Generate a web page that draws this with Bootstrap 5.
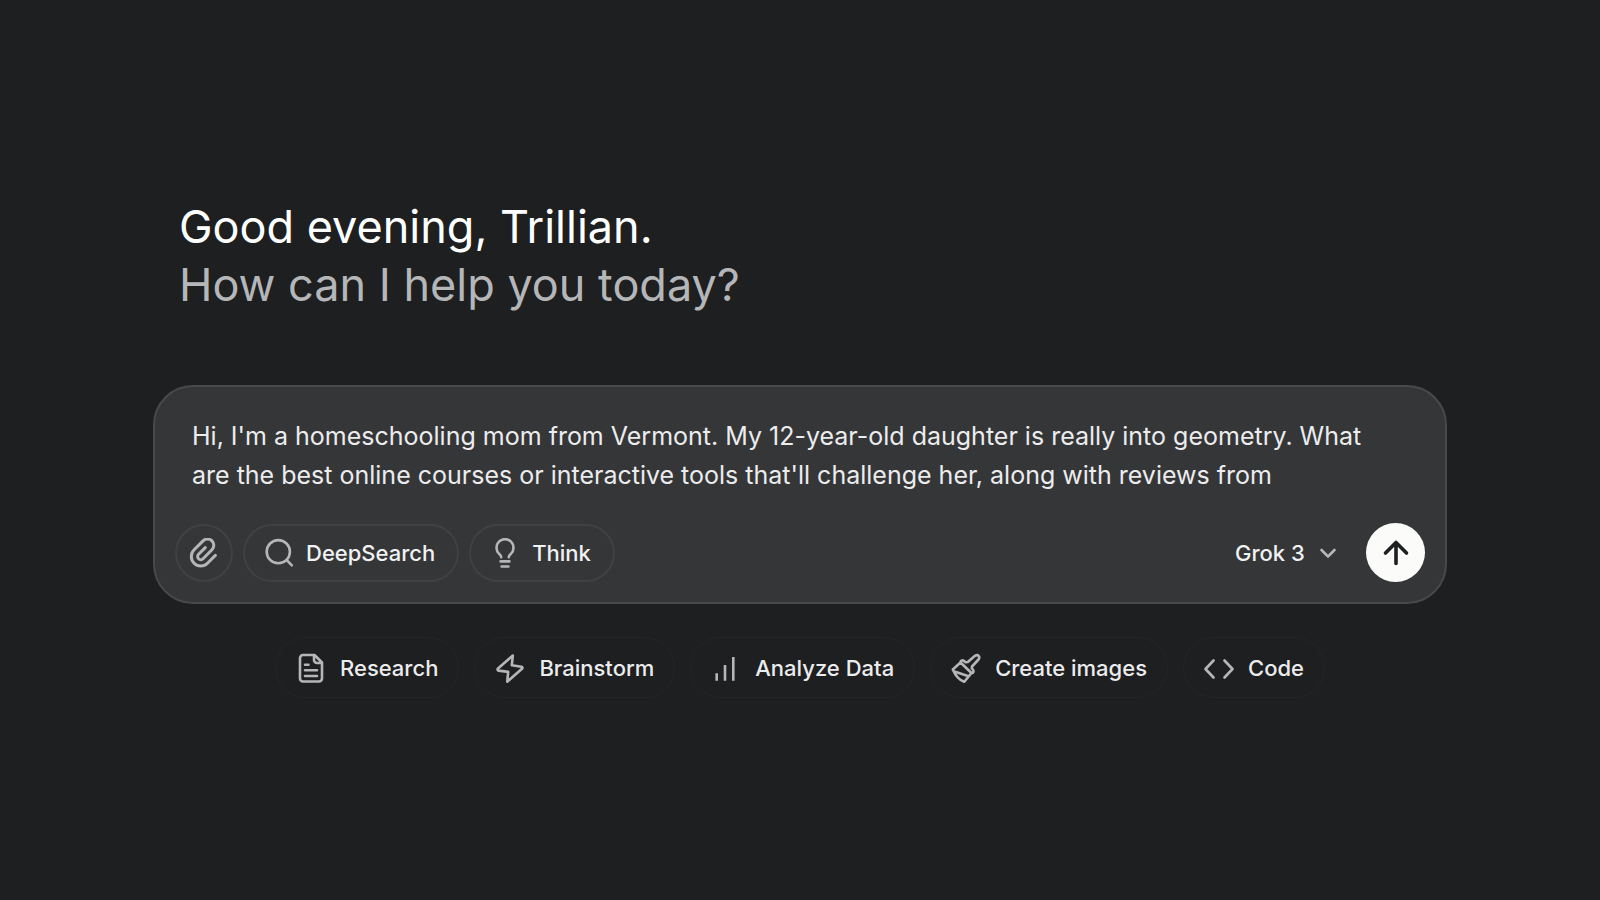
<!DOCTYPE html>
<html lang="en" data-bs-theme="dark">
<head>
<meta charset="utf-8">
<meta name="viewport" content="width=device-width, initial-scale=1">
<title>Grok</title>
<link href="https://cdn.jsdelivr.net/npm/bootstrap@5.3.0/dist/css/bootstrap.min.css" rel="stylesheet">
<style>
  body { background: #1e1f21; color: #f4f5f5; font-family: Inter, "Liberation Sans", sans-serif; }
  .chat-shell { max-width: 1294px; }
  .greeting { font-size: 45px; line-height: 58px; font-weight: 400; padding-left: 26px; margin-bottom: 71px; }
  .greeting-sub { color: #b5b6b8; }
  .composer { background: #353638; border: 2px solid #48494b; border-radius: 40px; padding: 30px 20px 20px; }
  .prompt-box { background: transparent; border: 0; outline: 0; resize: none; color: #ececed; font-size: 25px; line-height: 39px; padding: 0 40px 0 17px; overflow: hidden; display: block; margin-bottom: 28px; }
  .tool-group { gap: 10px; }
  .tool-btn { height: 58px; border: 2px solid #404143; color: #f0f1f1; font-size: 22px; font-weight: 500; line-height: 30px; gap: 12px; padding: 0 22px 0 19px; }
  .tool-round { width: 58px; padding: 0; }
  .tool-btn:hover, .chip:hover { background: #3d3e40; color: #fff; border-color: #4a4b4d; }
  .model-select { appearance: none; background: transparent; border: 0; color: #f0f1f1; font-size: 22px; font-weight: 500; line-height: 30px; padding: 0; }
  .model-caret { margin: 0 23px 0 8px; }
  .send-btn { width: 59px; height: 59px; padding: 0; background: #fbfbf9; color: #1e1f21; }
  .send-btn:hover { background: #e6e6e4; color: #1e1f21; }
  .chip-row { margin-top: 33px; gap: 15px; }
  .chip { height: 61px; border: 1px solid #242527; color: #ececed; font-size: 22px; font-weight: 500; line-height: 30px; gap: 14px; padding: 0 20px; }
  .glyph { width: 30px; height: 30px; flex: none; fill: none; stroke: #b5b6b8; stroke-width: 2.6; stroke-linecap: round; stroke-linejoin: round; }
  .glyph-clip { stroke-width: 1.9; }
  .send-btn .glyph { stroke: #1e1f21; stroke-width: 3.6; }
</style>
</head>
<body>
<main class="min-vh-100 d-flex flex-column justify-content-center pb-1">
  <div class="chat-shell w-100 mx-auto">
    <h1 class="greeting">Good evening, Trillian.<br><span class="greeting-sub">How can I help you today?</span></h1>

    <form class="composer">
      <textarea id="prompt" class="prompt-box w-100" rows="2" spellcheck="false" aria-label="Message">Hi, I'm a homeschooling mom from Vermont. My 12-year-old daughter is really into geometry. What are the best online courses or interactive tools that'll challenge her, along with reviews from</textarea>
      <div class="d-flex flex-wrap align-items-center">
        <div class="tool-group d-flex">
          <button type="button" class="btn tool-btn tool-round rounded-circle d-flex align-items-center justify-content-center" aria-label="Attach file">
            <svg class="glyph glyph-clip" viewBox="2.4 2.4 19 19"><path transform="rotate(45 12 12)" d="M10 9v6a2 2 0 0 0 4 0V7a4 4 0 0 0-8 0v8a6 6 0 0 0 12 0V8"/></svg>
          </button>
          <button type="button" class="btn tool-btn rounded-pill d-flex align-items-center">
            <svg class="glyph" viewBox="0 0 30 30"><circle cx="14.3" cy="13.7" r="11.6"/><path d="M22.8 22.2l5 5.2"/></svg>DeepSearch
          </button>
          <button type="button" class="btn tool-btn rounded-pill d-flex align-items-center">
            <svg class="glyph" viewBox="0 0 30 30"><path d="M11.200 19.200c0-1.500-1-2.500-2.200-3.500a8.500 8.500 0 1 1 12 0c-1.200 1-2.200 2-2.200 3.500"/><path d="M10.600 23.400h8.800M11.600 28.500h6.800"/></svg>Think
          </button>
        </div>
        <div class="d-flex align-items-center ms-auto">
          <select id="model" class="model-select" aria-label="Model"><option>Grok 3</option></select>
          <svg class="glyph model-caret" viewBox="0 0 30 30"><path d="M8.500 12l6.500 6.500L21.500 12"/></svg>
          <button type="submit" class="btn send-btn rounded-circle border-0 d-flex align-items-center justify-content-center" aria-label="Send">
            <svg class="glyph" viewBox="0 0 30 30"><path d="M15 25.500V4.500M4.500 15L15 4.500 25.500 15"/></svg>
          </button>
        </div>
      </div>
    </form>

    <div class="chip-row d-flex flex-wrap justify-content-center">
      <button type="button" class="btn chip rounded-pill d-flex align-items-center">
        <svg class="glyph" viewBox="0 0 30 30"><path d="M18.500 2H7a3 3 0 0 0-3 3v20.500a3 3 0 0 0 3 3h16a3 3 0 0 0 3-3V9.500zM18 2.500V7a3 3 0 0 0 3 3h4.500M9 11.700h3.500M9 17.300h12M9 23h12"/></svg>Research
      </button>
      <button type="button" class="btn chip rounded-pill d-flex align-items-center">
        <svg class="glyph" viewBox="0 0 30 30"><path d="M17.800 2.500L3 15.500c-.8.700-.4 1.900.7 2.100l9.500 1.300-1 9.800L27 15.800c.8-.7.500-1.900-.6-2.100L16.800 12.300z"/></svg>Brainstorm
      </button>
      <button type="button" class="btn chip rounded-pill d-flex align-items-center">
        <svg class="glyph" viewBox="0 0 30 30"><path d="M5.700 27.700v-7.400M14 27.700V12M22.300 27.700V4" stroke-linecap="butt"/></svg>Analyze Data
      </button>
      <button type="button" class="btn chip rounded-pill d-flex align-items-center">
        <svg class="glyph" viewBox="0 0 30 30"><path d="M1.800 16.500L9.500 9.500c-.2-2 2.500-3 4-1l1.500.8 1.800-.3 7.200-6.200c3-2 5.500 1 3.500 3.700L21 13.500l-.2 2c2.500 1.500 2 4.500-.3 4.500l-7.200 8.800c-4.500-1.500-9-6.500-11.500-12.300zM9.500 9.500l11 10.500M3 18.500c5 1.500 9.500 3.300 14 4.500"/></svg>Create images
      </button>
      <button type="button" class="btn chip rounded-pill d-flex align-items-center">
        <svg class="glyph" viewBox="0 0 30 30"><path d="M9.500 7.500L1.500 16l8 8.500M20.500 7.500l8 8.500-8 8.500"/></svg>Code
      </button>
    </div>
  </div>
</main>
<script src="https://cdn.jsdelivr.net/npm/bootstrap@5.3.0/dist/js/bootstrap.bundle.min.js"></script>
</body>
</html>
